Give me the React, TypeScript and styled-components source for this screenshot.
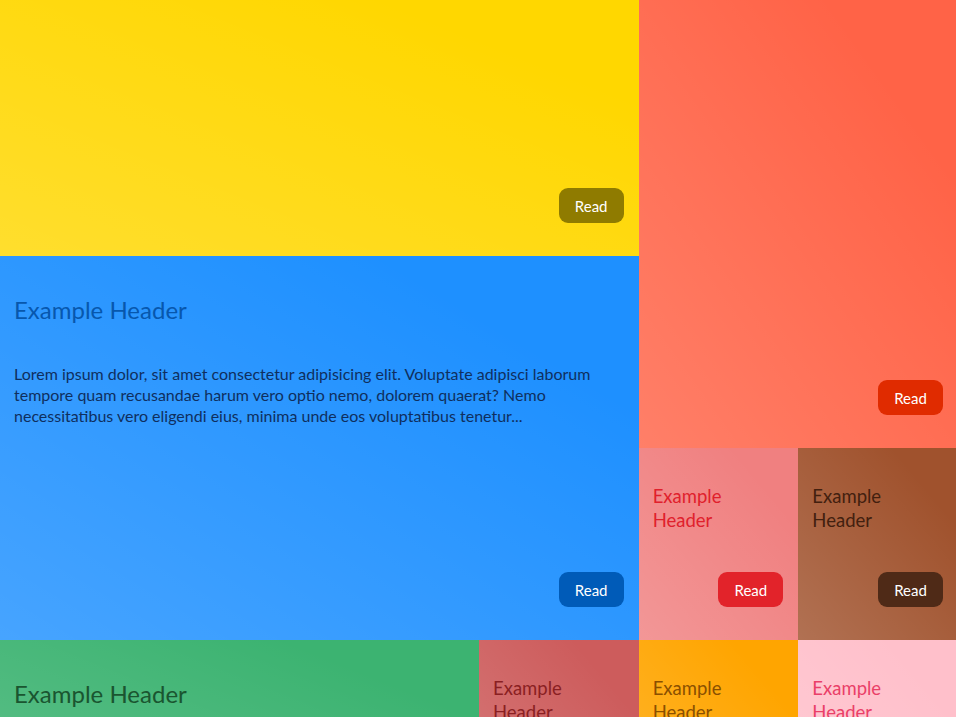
import React from 'react'
import styled, {createGlobalStyle} from 'styled-components'

const Global = createGlobalStyle`
  html, body {
    margin: 0;
    padding: 0;
    overflow: hidden;
    background: #fff;
  }
  body {
    font-family: Lato, "Open Sans", sans-serif;
  }
`

const Grid = styled.div`
  display: grid;
  grid-template-columns: repeat(6, 1fr);
  grid-auto-rows: 64px;
  width: 958px;
`

const Tile = styled.div<{$bg: string; $col: string; $row: string}>`
  grid-column: ${(p) => p.$col};
  grid-row: ${(p) => p.$row};
  background-color: ${(p) => p.$bg};
  background-image: linear-gradient(to top right, rgba(255, 255, 255, 0.18), rgba(255, 255, 255, 0) 80%);
  display: flex;
  flex-direction: column;
  padding: 0 15px 33px 14px;
  box-sizing: border-box;
  overflow: hidden;
`

const Header = styled.h2<{$color: string; $big?: boolean}>`
  margin: ${(p) => (p.$big ? '40px 0 0' : '36px 0 0')};
  font-weight: 400;
  font-size: ${(p) => (p.$big ? '24px' : '18.5px')};
  line-height: ${(p) => (p.$big ? '28px' : '24px')};
  color: ${(p) => p.$color};
`

const Body = styled.p<{$color: string}>`
  margin: 39px 0 0;
  font-size: 16px;
  line-height: 21px;
  color: ${(p) => p.$color};
`

const ReadButton = styled.button<{$bg: string}>`
  margin-top: auto;
  align-self: flex-end;
  width: 65px;
  height: 35px;
  border: none;
  border-radius: 9px;
  background: ${(p) => p.$bg};
  color: #fff;
  font-family: Lato, "Open Sans", sans-serif;
  font-size: 15px;
  padding: 0;
`

const lorem =
  'Lorem ipsum dolor, sit amet consectetur adipisicing elit. Voluptate adipisci laborum tempore quam recusandae harum vero optio nemo, dolorem quaerat? Nemo necessitatibus vero eligendi eius, minima unde eos voluptatibus tenetur...'

export default function App() {
  return (
    <>
      <Global />
      <Grid>
        <Tile $bg='#ffd700' $col='1 / 5' $row='1 / 5'>
          <ReadButton $bg='#8f7b00'>Read</ReadButton>
        </Tile>
        <Tile $bg='#ff6347' $col='5 / 7' $row='1 / 8'>
          <ReadButton $bg='#e02b00'>Read</ReadButton>
        </Tile>
        <Tile $bg='#1e90ff' $col='1 / 5' $row='5 / 11'>
          <Header $big $color='#0757ad'>Example Header</Header>
          <Body $color='#0f2f5e'>{lorem}</Body>
          <ReadButton $bg='#005bb8'>Read</ReadButton>
        </Tile>
        <Tile $bg='#f08080' $col='5 / 6' $row='8 / 11'>
          <Header $color='#e0202c'>Example Header</Header>
          <ReadButton $bg='#e2232a'>Read</ReadButton>
        </Tile>
        <Tile $bg='#a0522d' $col='6 / 7' $row='8 / 11'>
          <Header $color='#42200f'>Example Header</Header>
          <ReadButton $bg='#4f2a17'>Read</ReadButton>
        </Tile>
        <Tile $bg='#3cb371' $col='1 / 4' $row='11 / 14'>
          <Header $big $color='#1a5530'>Example Header</Header>
        </Tile>
        <Tile $bg='#cd5c5c' $col='4 / 5' $row='11 / 14'>
          <Header $color='#8a1f22'>Example Header</Header>
        </Tile>
        <Tile $bg='#ffa500' $col='5 / 6' $row='11 / 14'>
          <Header $color='#8a4f00'>Example Header</Header>
        </Tile>
        <Tile $bg='#ffc0cb' $col='6 / 7' $row='11 / 14'>
          <Header $color='#ea3f68'>Example Header</Header>
        </Tile>
      </Grid>
    </>
  )
}
